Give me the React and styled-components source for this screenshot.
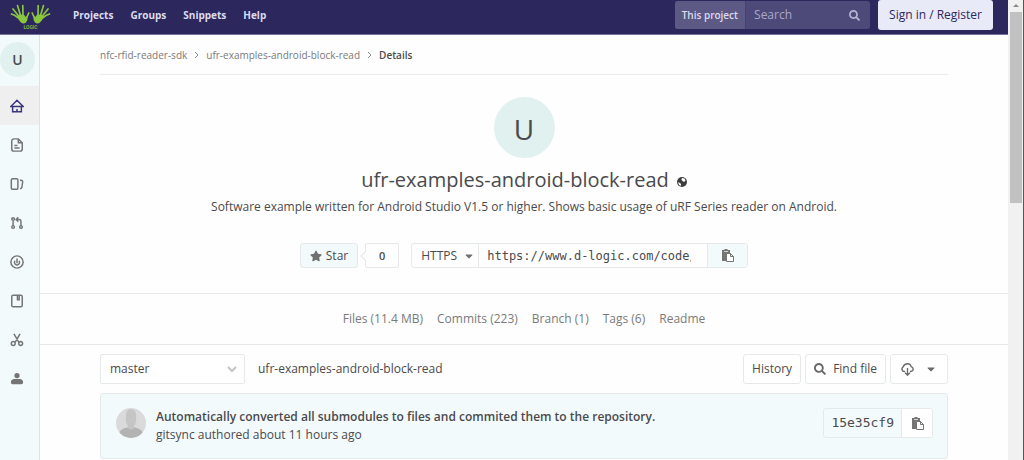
import React from 'react';
import styled, { createGlobalStyle, ThemeProvider } from 'styled-components';
import { FaStar, FaSearch, FaCaretDown } from 'react-icons/fa';

const theme = {
  navy: '#2c285d',
  mint: '#f3fafc',
  avatar: '#e1f1f0',
  line: '#e6e9e9',
  text: '#4a4a4c',
  muted: '#7a7a7a',
  sans: '"Open Sans", "Noto Sans", sans-serif',
  mono: '"DejaVu Sans Mono", monospace',
};

const GlobalStyle = createGlobalStyle`
  * { box-sizing: border-box; }
  body {
    margin: 0;
    overflow: hidden;
    background: #fefefe;
    color: ${theme.text};
    font-family: ${theme.sans};
    font-size: 12px;
    line-height: 18px;
  }
  button, input, select { font: inherit; color: inherit; }
  a { color: inherit; text-decoration: none; }
  svg { display: block; flex: none; }
`;

const Window = styled.div`
  display: grid;
  grid-template-columns: minmax(0, 1fr) 16px;
  height: 100vh;
  overflow: hidden;
`;

const Navbar = styled.header`
  display: flex;
  align-items: center;
  height: 35px;
  padding: 0 15px 4px 10px;
  background: ${props => props.theme.navy};
  border-bottom: 1px solid #76739a;
  color: #dcdbf0;
`;

const LogoLink = styled.a`
  margin-top: 4px;
  margin-right: 22px;
`;

const NavLinks = styled.nav`
  display: flex;
  gap: 17px;
  flex: 1;
  font-size: 10px;
  font-weight: 700;
`;

const SearchForm = styled.form`
  display: flex;
  height: 28px;
  margin-right: 8px;
  border-radius: 3px;
  overflow: hidden;
  background: #4d4a79;
`;

const Scope = styled.span`
  padding: 5px 7px;
  background: #5c5985;
  border-right: 1px solid #43407a;
  font-size: 10px;
  font-weight: 600;
`;

const SearchInput = styled.input`
  width: 98px;
  padding: 0 8px;
  border: 0;
  outline: 0;
  background: transparent;
  &::placeholder { color: #a9a7cb; opacity: 1; }
`;

const SearchButton = styled.button`
  padding: 0 10px 0 5px;
  border: 0;
  background: transparent;
  color: #b5b3d3;
`;

const SignIn = styled.a`
  padding: 6px 11px;
  border-radius: 3px;
  background: #e9eaf7;
  color: ${props => props.theme.navy};
`;

const Page = styled.div`
  display: grid;
  grid-template-columns: 40px minmax(0, 1fr);
  min-height: calc(100vh - 35px);
`;

const Sidebar = styled.nav`
  display: flex;
  flex-direction: column;
  background: ${props => props.theme.mint};
  border-right: 1px solid #dfe2e2;
`;

const SideAvatar = styled.a`
  width: 35px;
  height: 35px;
  margin: 7px 0 9px;
  border-radius: 50%;
  background: ${props => props.theme.avatar};
  font-size: 14px;
  font-weight: 600;
  line-height: 35px;
  text-align: center;
`;

const SideLink = styled.a`
  display: flex;
  align-items: center;
  height: 39px;
  padding-left: 10px;
  color: ${props => (props.$active ? '#3a367c' : '#757575')};
  background: ${props => (props.$active ? '#efefef' : 'transparent')};
`;

const Breadcrumbs = styled.nav`
  display: flex;
  align-items: center;
  gap: 7px;
  height: 40px;
  margin: 0 60px;
  border-bottom: 1px solid #ececec;
  color: ${props => props.theme.muted};
  font-size: 10px;
  strong { color: ${props => props.theme.text}; font-weight: 600; }
`;

const Hero = styled.section`
  display: flex;
  flex-direction: column;
  align-items: center;
  padding: 22px 60px 25px;
  border-bottom: 1px solid ${props => props.theme.line};
`;

const Avatar = styled.div`
  width: 61px;
  height: 61px;
  border-radius: 50%;
  background: ${props => props.theme.avatar};
  font-size: 28px;
  line-height: 64px;
  text-align: center;
`;

const Title = styled.h1`
  display: flex;
  align-items: center;
  gap: 8px;
  margin: 8px 0 4px;
  font-size: 20px;
  font-weight: 400;
  line-height: 28px;
  svg { margin-top: 4px; }
`;

const Description = styled.p`
  margin: 0 0 27px;
`;

const Actions = styled.div`
  display: flex;
  height: 25px;
`;

const StarButton = styled.button`
  display: flex;
  align-items: center;
  gap: 4px;
  padding: 0 9px;
  border: 1px solid ${props => props.theme.line};
  border-radius: 3px;
  background: ${props => props.theme.mint};
  svg { color: #707070; }
`;

const StarCount = styled.span`
  position: relative;
  width: 34px;
  margin: 0 12px 0 7px;
  border: 1px solid ${props => props.theme.line};
  border-radius: 2px;
  font-size: 11px;
  font-weight: 600;
  line-height: 24px;
  text-align: center;
  &::before {
    content: '';
    position: absolute;
    top: 8px;
    left: -4px;
    width: 7px;
    height: 7px;
    border: solid ${props => props.theme.line};
    border-width: 0 0 1px 1px;
    background: #fefefe;
    transform: rotate(45deg);
  }
`;

const CloneGroup = styled.div`
  display: flex;
  border: 1px solid ${props => props.theme.line};
  border-radius: 3px;
  overflow: hidden;
`;

const Protocol = styled.button`
  display: flex;
  align-items: center;
  gap: 6px;
  width: 67px;
  padding: 0 8px 0 9px;
  border: 0;
  border-right: 1px solid ${props => props.theme.line};
  background: transparent;
  svg { color: #707070; }
`;

const CloneUrl = styled.input`
  width: 228px;
  padding: 0 16px 0 8px;
  border: 0;
  outline: 0;
  background: transparent;
  font-family: ${props => props.theme.mono};
`;

const CopyButton = styled.button`
  display: flex;
  align-items: center;
  justify-content: center;
  width: ${props => props.$width};
  padding: 0;
  border: 0;
  border-left: 1px solid ${props => props.theme.line};
  background: ${props => props.$bg};
  color: #757575;
`;

const Stats = styled.nav`
  display: flex;
  justify-content: center;
  gap: 14px;
  padding: 16px 60px;
  border-bottom: 1px solid ${props => props.theme.line};
  color: ${props => props.theme.muted};
`;

const Files = styled.section`
  padding: 9px 60px 0;
`;

const Toolbar = styled.div`
  display: flex;
  gap: 4px;
  margin-bottom: 9px;
`;

const BranchPicker = styled.button`
  display: flex;
  align-items: center;
  justify-content: space-between;
  width: 145px;
  height: 30px;
  padding: 0 7px 0 9px;
  border: 1px solid ${props => props.theme.line};
  border-radius: 2px;
  background: #fff;
`;

const Path = styled.a`
  flex: 1;
  padding: 6px 9px;
`;

const ToolButton = styled.button`
  display: flex;
  align-items: center;
  gap: ${props => (props.$wide ? '11px' : '7px')};
  height: 30px;
  padding: 0 ${props => (props.$wide ? '10px' : '8px')};
  border: 1px solid ${props => props.theme.line};
  border-radius: 3px;
  background: #fff;
  svg { color: #6b6b6b; }
`;

const Commit = styled.article`
  display: flex;
  align-items: center;
  gap: 10px;
  height: 66px;
  padding: 0 14px 6px 15px;
  border: 1px solid ${props => props.theme.line};
  border-radius: 3px;
  background: ${props => props.theme.mint};
  strong { display: block; font-weight: 600; }
`;

const CommitText = styled.div`
  flex: 1;
  padding-top: 5px;
`;

const Sha = styled.div`
  display: flex;
  height: 30px;
  border: 1px solid ${props => props.theme.line};
  border-radius: 3px;
  overflow: hidden;
  font-family: ${props => props.theme.mono};
  font-size: 13px;
  line-height: 28px;
  a { padding: 0 7px; }
`;

const Scrollbar = styled.div`
  padding: 12px 1px 0 2px;
  background: #f1f1f1;
  border-right: 1px solid #55555a;
  &::after {
    content: '';
    display: block;
    height: 191px;
    background: #c1c1c1;
  }
`;

const Arrow = styled.div`
  width: 0;
  margin: -8px auto 5px;
  border: 3px solid transparent;
  border-top: 0;
  border-bottom-color: #8a8a8a;
`;

function Hand({ flip }) {
  return (
    <g transform={flip ? 'translate(41 0) scale(-1 1)' : undefined}>
      <path d="M7 12.500Q9 10.500 12 10.500q3 0 3.500 2.500l2-1q.5 4-1.500 6.500-2.500 2-5 0Q8.500 16 7 12.500Z" fill="#8bc63f" />
      <path
        d="M8.500 14 5 11.500 1.500 10 M9 12.500 3 5 M10.500 11.500 7.500 1.500 M13 11.500 12.800 1.500 M16 15 18.800 9"
        stroke="#8bc63f"
        strokeWidth="1.700"
        strokeLinecap="round"
      />
    </g>
  );
}

function Logo() {
  return (
    <svg width="41" height="26" viewBox="0 0 41 26" fill="none">
      <Hand />
      <Hand flip />
      <text x="20.500" y="25" fill="#7fb53c" fontFamily="Roboto, sans-serif" fontSize="5" fontWeight="700" textAnchor="middle">
        LOGIC
      </text>
    </svg>
  );
}

function GlobeIcon() {
  return (
    <svg width="10" height="10" viewBox="0 0 16 16">
      <circle cx="8" cy="8" r="8" fill="#3d3d3f" />
      <path d="M8 1.500l4 1 1.500 2.500-1 2-2.500.5L8.500 6 7 4.500z M1.500 8.500 4 9l2.500 2-.5 3.500Q2.500 13 1.500 8.500z" fill="#fefefe" />
    </svg>
  );
}

function PasteIcon() {
  return (
    <svg width="13" height="13" viewBox="0 0 13 13">
      <path d="M1 1h2.500V0h3v1H9v3.500H5V12H1z" fill="currentColor" />
      <path d="M3 2.500h4" stroke="#d5d5d5" />
      <path d="M5.500 4.500h4l3 3v5h-7z M9.500 4.500v3h3" fill="#fff" stroke="currentColor" />
    </svg>
  );
}

function CloudIcon() {
  return (
    <svg width="13" height="13" viewBox="0 0 16 16" fill="none" stroke="currentColor" strokeWidth="1.700">
      <path d="M5 10.500H4A3 3 0 0 1 2.500 5 Q4 1 8 1q3.500 0 4.500 3.500 2.500 1 2.500 3 0 2.500-3 3h-1" />
      <path d="M8 6v9 M5 12l3 3 3-3" />
    </svg>
  );
}

function UserPicture() {
  return (
    <svg width="30" height="30" viewBox="0 0 30 30">
      <clipPath id="round"><circle cx="15" cy="15" r="15" /></clipPath>
      <g clipPath="url(#round)">
        <path d="M0 0h30v30H0z" fill="#dadada" />
        <path d="M2 30Q2 21 11 19.500h8q9 1.500 9 10.500z" fill="#b3b3b3" />
        <path d="M10 7q0-6 5-6t5 6q1 8-2 11v2q-3 3-6 0v-2q-3-3-2-11z" fill="#c5c5c5" />
      </g>
    </svg>
  );
}

const sideItems = [
  {
    label: 'Overview',
    active: true,
    icon: <path d="M1 8.500 8 1.500l7 7z M3 8.500v6h10v-6 M8 14.500v-3" />,
  },
  {
    label: 'Repository',
    icon: <path d="M9.500 1H4.500A2.500 2.500 0 0 0 2 3.500v9A2.500 2.500 0 0 0 4.500 15h7a2.500 2.500 0 0 0 2.500-2.500V5.500z M9.500 1.500v4h4 M5 8.500h3.500 M5 11.500h6" />,
  },
  {
    label: 'Issues',
    icon: <path d="M3 2h4.500A1.500 1.500 0 0 1 9 3.500v9A1.500 1.500 0 0 1 7.500 14H3a1.500 1.500 0 0 1-1.500-1.500v-9A1.500 1.500 0 0 1 3 2z M11.500 3.500l2 .5q1 .5 1 1.500l-1 6.500q-.5 1.500-2 1.500" />,
  },
  {
    label: 'Merge Requests',
    icon: <path d="M3.500 5v6 M12.500 11V6.500q0-2.500-2-2.500H8 M9.500 1.500 7 4l2.500 2.500 M2 3.500a1.500 1.500 0 1 0 3 0 1.500 1.500 0 1 0-3 0 M2 12.500a1.500 1.500 0 1 0 3 0 1.500 1.500 0 1 0-3 0 M11 12.500a1.500 1.500 0 1 0 3 0 1.500 1.500 0 1 0-3 0" />,
  },
  {
    label: 'CI / CD',
    icon: <path d="M1 8a7 7 0 1 0 14 0 7 7 0 1 0-14 0 M8 4v4 M5.500 6.500q-1.500 4 2.500 5 4-1 2.500-5 M8 8v1.500" />,
  },
  {
    label: 'Wiki',
    icon: <path d="M3.500 1.500h9A1.500 1.500 0 0 1 14 3v10a1.500 1.500 0 0 1-1.500 1.500h-9A1.500 1.500 0 0 1 2 13V3a1.500 1.500 0 0 1 1.500-1.500z M8.500 2v4.500h2V2" />,
  },
  {
    label: 'Snippets',
    icon: <path d="M4.500 1 10 10.500 M11.500 1 6 10.500 M1.500 12a2.200 2.200 0 1 0 4.400 0 2.200 2.200 0 1 0-4.400 0 M10 12a2.200 2.200 0 1 0 4.400 0 2.200 2.200 0 1 0-4.400 0" />,
  },
  {
    label: 'Members',
    icon: <path d="M5 4a3 3 0 1 0 6 0 3 3 0 1 0-6 0 M1 12q0-4 4-4h6q4 0 4 4 0 2-2 2H3q-2 0-2-2" fill="currentColor" stroke="none" />,
  },
];

const stats = ['Files (11.4 MB)', 'Commits (223)', 'Branch (1)', 'Tags (6)', 'Readme'];

function Chevron({ down }) {
  return (
    <svg width={down ? 10 : 5} height={down ? 10 : 8} viewBox={down ? '0 0 10 10' : '0 0 5 8'} fill="none" stroke={down ? '#c4c4c4' : '#8c8c8c'} strokeWidth={down ? 2 : 1}>
      <path d={down ? 'M1 3l4 4 4-4' : 'M1 1l3 3-3 3'} />
    </svg>
  );
}

function App() {
  return (
    <ThemeProvider theme={theme}>
      <GlobalStyle />
      <Window>
        <div>
          <Navbar>
            <LogoLink href="#" aria-label="Home"><Logo /></LogoLink>
            <NavLinks>
              <a href="#">Projects</a>
              <a href="#">Groups</a>
              <a href="#">Snippets</a>
              <a href="#">Help</a>
            </NavLinks>
            <SearchForm>
              <Scope>This project</Scope>
              <SearchInput placeholder="Search" aria-label="Search" />
              <SearchButton type="button" aria-label="Submit search"><FaSearch size={11} /></SearchButton>
            </SearchForm>
            <SignIn href="#">Sign in / Register</SignIn>
          </Navbar>
          <Page>
            <Sidebar>
              <SideAvatar href="#">U</SideAvatar>
              {sideItems.map(item => (
                <SideLink key={item.label} href="#" aria-label={item.label} $active={item.active}>
                  <svg width="14" height="14" viewBox="0 0 16 16" fill="none" stroke="currentColor" strokeWidth="1.700">
                    {item.icon}
                  </svg>
                </SideLink>
              ))}
            </Sidebar>
            <main>
              <Breadcrumbs>
                <a href="#">nfc-rfid-reader-sdk</a>
                <Chevron />
                <a href="#">ufr-examples-android-block-read</a>
                <Chevron />
                <strong>Details</strong>
              </Breadcrumbs>
              <Hero>
                <Avatar>U</Avatar>
                <Title>ufr-examples-android-block-read <GlobeIcon /></Title>
                <Description>
                  Software example written for Android Studio V1.5 or higher. Shows basic usage of uRF Series reader on Android.
                </Description>
                <Actions>
                  <StarButton><FaStar size={12} />Star</StarButton>
                  <StarCount>0</StarCount>
                  <CloneGroup>
                    <Protocol>HTTPS <FaCaretDown size={12} /></Protocol>
                    <CloneUrl readOnly aria-label="Clone URL" value="https://www.d-logic.com/code/" />
                    <CopyButton $width="40px" $bg={theme.mint} aria-label="Copy URL"><PasteIcon /></CopyButton>
                  </CloneGroup>
                </Actions>
              </Hero>
              <Stats>
                {stats.map(stat => <a key={stat} href="#">{stat}</a>)}
              </Stats>
              <Files>
                <Toolbar>
                  <BranchPicker>master<Chevron down /></BranchPicker>
                  <Path href="#">ufr-examples-android-block-read</Path>
                  <ToolButton>History</ToolButton>
                  <ToolButton><FaSearch size={12} />Find file</ToolButton>
                  <ToolButton $wide aria-label="Download"><CloudIcon /><FaCaretDown size={12} /></ToolButton>
                </Toolbar>
                <Commit>
                  <UserPicture />
                  <CommitText>
                    <strong>Automatically converted all submodules to files and commited them to the repository.</strong>
                    gitsync authored about 11 hours ago
                  </CommitText>
                  <Sha>
                    <a href="#">15e35cf9</a>
                    <CopyButton $width="31px" $bg="#fff" aria-label="Copy commit SHA"><PasteIcon /></CopyButton>
                  </Sha>
                </Commit>
              </Files>
            </main>
          </Page>
        </div>
        <Scrollbar><Arrow /></Scrollbar>
      </Window>
    </ThemeProvider>
  );
}

export default App;
